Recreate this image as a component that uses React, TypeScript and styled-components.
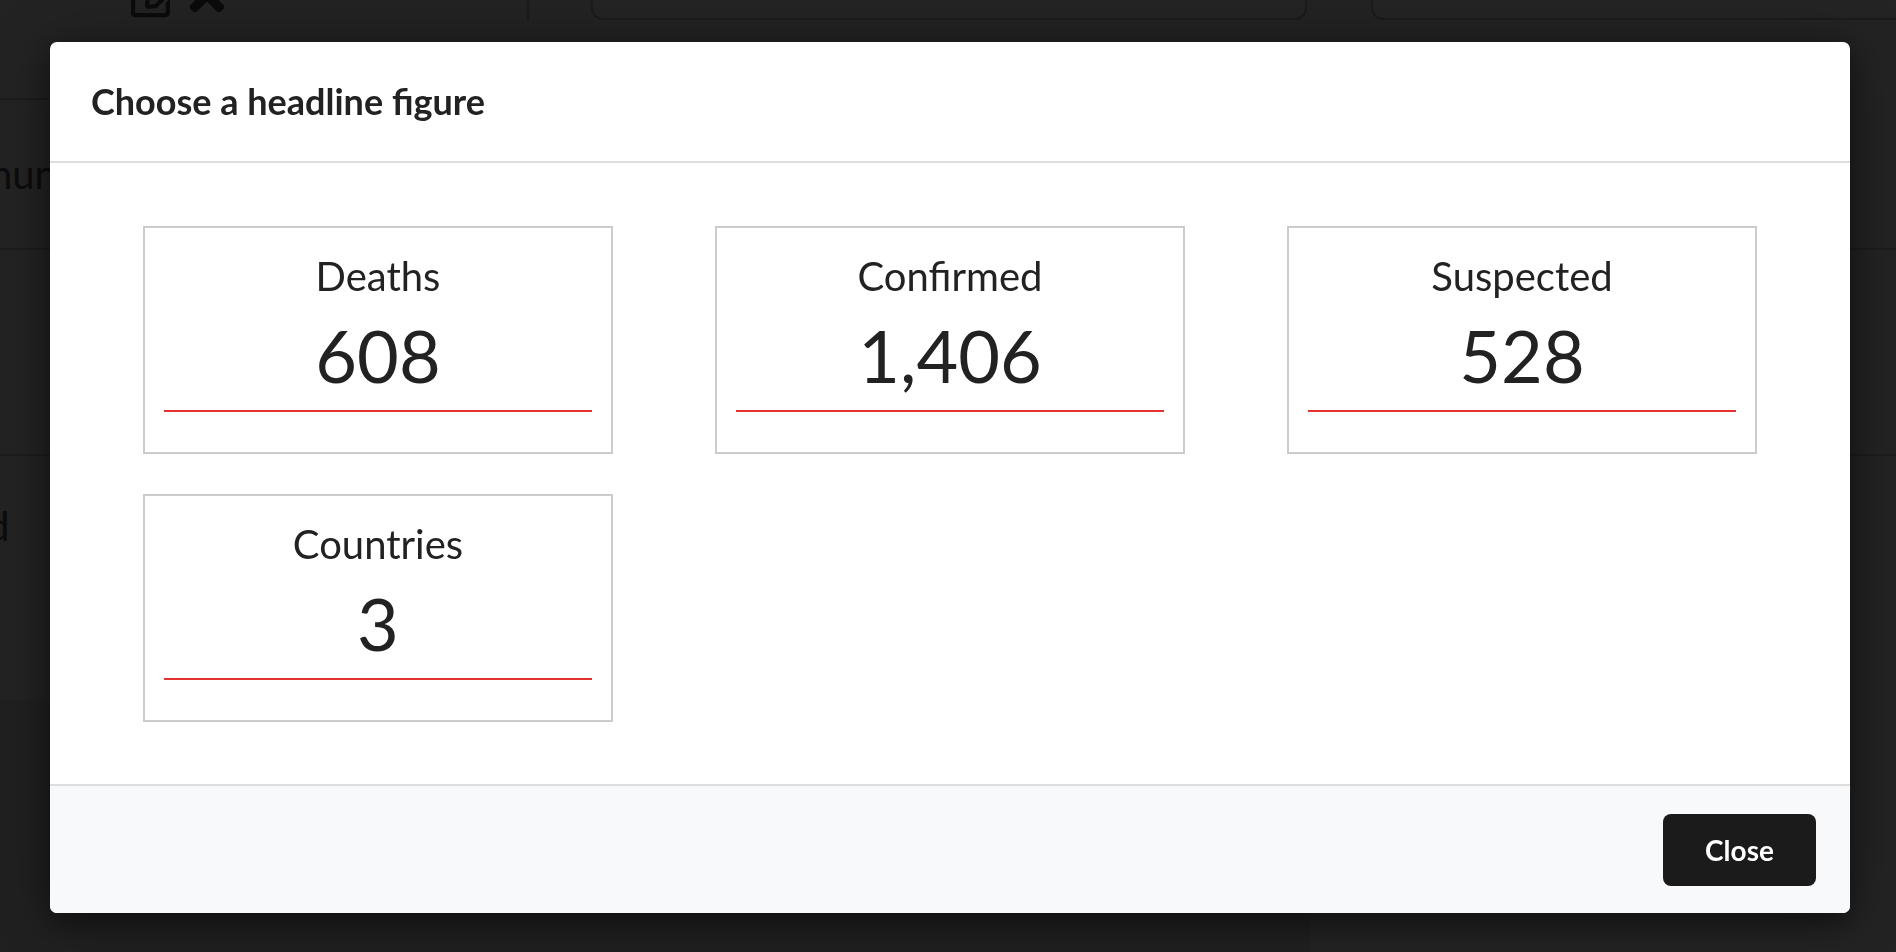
import React from "react";
import styled, { createGlobalStyle } from "styled-components";
import { FaRegEdit, FaTimes } from "react-icons/fa";

const GlobalStyle = createGlobalStyle`
  html, body {
    margin: 0;
    padding: 0;
    background: #232323;
    overflow: hidden;
    font-family: Lato, "Open Sans", "Liberation Sans", sans-serif;
  }
  * { box-sizing: border-box; }
`;

/* ---------- dimmed page behind the dialog ---------- */

const Page = styled.div`
  width: 100vw;
  height: 100vh;
  overflow: hidden;
  background: #232323;
  display: flex;
  flex-direction: column;
`;

const Scrolled = styled.div`
  margin-top: -82px;
  display: flex;
  flex-direction: column;
`;

const TopRow = styled.div`
  display: flex;
  height: 102px;
`;

const ActionsCell = styled.div`
  width: 529px;
  flex: none;
  border-right: 2px solid #1c1c1c;
  display: flex;
  align-items: flex-end;
  gap: 1px;
  padding: 0 0 0 131px;
  color: #0b0b0b;
  font-size: 50px;
  line-height: 0;
`;

const FieldsCell = styled.div`
  flex: 1;
  display: flex;
  align-items: flex-end;
  gap: 64px;
  padding: 0 0 0 62px;
  margin-right: -120px;
`;

const FieldBox = styled.div<{ $w: number }>`
  width: ${(p) => p.$w}px;
  height: 80px;
  border: 2px solid #1b1b1b;
  border-top: none;
  border-radius: 0 0 12px 12px;
  background: #242424;
`;

const Row = styled.div<{ $h: number; $line?: boolean; $top?: number }>`
  height: ${(p) => p.$h}px;
  border-bottom: ${(p) => (p.$line ? "2px solid #1c1c1c" : "none")};
  display: flex;
  align-items: ${(p) => (p.$top !== undefined ? "flex-start" : "center")};
  padding-top: ${(p) => p.$top ?? 0}px;
  color: #0c0c0c;
  font-size: 40px;
  line-height: 48px;
  white-space: nowrap;
`;

const LeftRule = styled.div`
  width: 529px;
  height: 80px;
  border-bottom: 2px solid #1c1c1c;
`;

const CellText = styled.span<{ $shift: number }>`
  margin-left: ${(p) => p.$shift}px;
`;

const BottomArea = styled.div`
  flex: 1;
  display: flex;
  height: 300px;
`;

const BottomLeft = styled.div`
  width: 1312px;
  background: #202020;
  border-right: 2px solid #222;
`;

const BottomRight = styled.div`
  flex: 1;
  background: #232323;
`;

/* ---------- dialog ---------- */

const Overlay = styled.div`
  position: fixed;
  inset: 0;
  padding: 42px 46px 0 50px;
  display: flex;
  flex-direction: column;
  align-items: stretch;
`;

const Modal = styled.div`
  background: #fff;
  border-radius: 7px;
  overflow: hidden;
  box-shadow: 0 10px 30px rgba(0, 0, 0, 0.45), 0 0 60px rgba(0, 0, 0, 0.25);
  display: flex;
  flex-direction: column;
`;

const Header = styled.div`
  padding: 38px 41px;
  border-bottom: 2px solid #dedede;
`;

const Title = styled.h2`
  margin: 0;
  font-family: Lato, "Open Sans", sans-serif;
  font-weight: 700;
  font-size: 36px;
  line-height: 43px;
  color: #222;
`;

const Body = styled.div`
  padding: 63px 93px 62px;
  display: grid;
  grid-template-columns: repeat(3, 1fr);
  column-gap: 102px;
  row-gap: 40px;
`;

const Card = styled.button`
  all: unset;
  box-sizing: border-box;
  border: 2px solid #cccccc;
  padding: 24px 19px 40px;
  text-align: center;
  cursor: pointer;
  display: flex;
  flex-direction: column;
  color: #222;
  font-family: Lato, "Open Sans", sans-serif;
`;

const Label = styled.div`
  font-size: 40px;
  line-height: 48px;
  font-weight: 400;
  margin-bottom: 12px;
`;

const Figure = styled.div`
  font-size: 72px;
  line-height: 86px;
  font-weight: 400;
  padding-bottom: 12px;
  border-bottom: 2px solid #e3342f;
`;

const Footer = styled.div`
  background: #f8f9fa;
  border-top: 2px solid #dedede;
  padding: 28px 34px 27px;
  display: flex;
  justify-content: flex-end;
`;

const CloseButton = styled.button`
  width: 153px;
  height: 72px;
  border: none;
  border-radius: 8px;
  background: #1b1b1b;
  color: #fff;
  font-family: Lato, "Open Sans", sans-serif;
  font-weight: 700;
  font-size: 28px;
  cursor: pointer;
`;

const figures = [
  { label: "Deaths", value: "608" },
  { label: "Confirmed", value: "1,406" },
  { label: "Suspected", value: "528" },
  { label: "Countries", value: "3" },
];

export default function App() {
  return (
    <>
      <GlobalStyle />
      <Page>
        <Scrolled>
          <TopRow>
            <ActionsCell>
              <FaRegEdit />
              <FaTimes />
            </ActionsCell>
            <FieldsCell>
              <FieldBox $w={716} />
              <FieldBox $w={640} />
            </FieldsCell>
          </TopRow>
          <LeftRule />
          <Row $h={150} $line>
            <CellText $shift={-10}>hun</CellText>
          </Row>
          <Row $h={206} $line />
          <Row $h={244} $top={46}>
            <CellText $shift={-13}>d</CellText>
          </Row>
        </Scrolled>
        <BottomArea>
          <BottomLeft />
          <BottomRight />
        </BottomArea>
      </Page>
      <Overlay>
        <Modal role="dialog" aria-labelledby="headline-title">
          <Header>
            <Title id="headline-title">Choose a headline figure</Title>
          </Header>
          <Body>
            {figures.map((f) => (
              <Card key={f.label}>
                <Label>{f.label}</Label>
                <Figure>{f.value}</Figure>
              </Card>
            ))}
          </Body>
          <Footer>
            <CloseButton>Close</CloseButton>
          </Footer>
        </Modal>
      </Overlay>
    </>
  );
}
